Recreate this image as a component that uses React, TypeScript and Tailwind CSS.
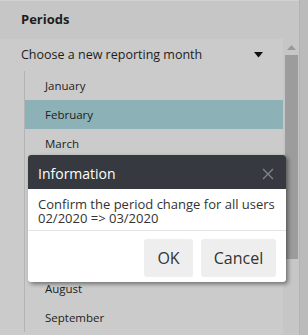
import * as React from "react";

const months = ["January", "February", "March", "April", "May", "June", "July", "August", "September"];

export default function App() {
  return (
    <div className="relative flex h-[335px] w-[308px] overflow-hidden bg-[#bbbbbb] font-['Open_Sans',sans-serif] text-[#1d1d1d]">
      {/* panel */}
      <div className="flex w-[300px] flex-col border-r border-[#b3b3b3] bg-[#cbcbcb]">
        <div className="flex h-[39px] items-center border-t border-[#d2d2d2] bg-[#c6c6c6] pl-[21px] text-[13px] font-bold">
          Periods
        </div>
        <div className="flex flex-1 overflow-hidden">
          <div className="flex flex-1 flex-col">
            <div className="flex h-[32px] items-center justify-between pl-[21px] pr-[20px] text-[12.5px]">
              <span>Choose a new reporting month</span>
              <svg width="9" height="6" viewBox="0 0 9 6">
                <path d="M0 0h9L4.5 5.5z" fill="#111" />
              </svg>
            </div>
            <div className="ml-[24px] flex flex-col border-l border-[#b4b4b4]">
              {months.map((m, i) => (
                <div
                  key={m}
                  className={
                    i === 1
                      ? "flex h-[29px] items-center bg-[#8cb2b7] pl-[20px] text-[11.5px]"
                      : "flex h-[29px] items-center pl-[20px] text-[11.5px]"
                  }
                >
                  {/* April..July sit under the dialog */}
                  <span className={i >= 3 && i <= 6 ? "invisible" : ""}>{m}</span>
                </div>
              ))}
            </div>
          </div>
          {/* scrollbar */}
          <div className="flex w-[16px] flex-col items-center bg-[#c6c6c6]">
            <svg className="mt-[6px]" width="9" height="5" viewBox="0 0 9 5">
              <path d="M4.5 0L9 5H0z" fill="#9a9a9a" />
            </svg>
            <div className="mt-[5px] h-[204px] w-[13px] bg-[#9c9c9c]" />
          </div>
        </div>
      </div>

      {/* dialog */}
      <div className="absolute left-[28px] top-[155px] w-[258px] overflow-hidden rounded-[3px] bg-white shadow-[2px_2px_4px_rgba(0,0,0,0.45)]">
        <div className="flex h-[34px] items-center justify-between bg-[#363a40] pl-[10px] pr-[12px] pt-[3px] text-[14px] text-white">
          <span>Information</span>
          <svg width="12" height="12" viewBox="0 0 12 12">
            <path d="M1 1l10 10M11 1L1 11" stroke="#80838a" strokeWidth="1.4" />
          </svg>
        </div>
        <div className="border-b border-[#e4e4e4] px-[10px] pb-[5px] pt-[8px] text-[13px] leading-[14px] text-[#333]">
          Confirm the period change for all users
          <br />
          02/2020 =&gt; 03/2020
        </div>
        <div className="flex justify-end gap-[8px] px-[10px] pb-[5px] pt-[8px]">
          <button className="h-[38px] w-[49px] rounded-[3px] bg-[#eeeeee] text-[16px] text-[#333]">OK</button>
          <button className="h-[38px] w-[75px] rounded-[3px] bg-[#eeeeee] text-[16px] text-[#333]">Cancel</button>
        </div>
      </div>
    </div>
  );
}
